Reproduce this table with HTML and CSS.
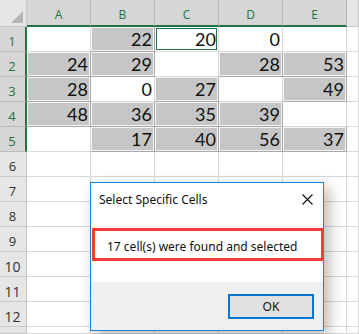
FILE: index.html
```html
<!DOCTYPE html>
<html lang="en">
<head>
    <meta charset="UTF-8">
    <title>Select Specific Cells</title>
    <link rel="stylesheet" href="styles.css">
</head>
<body>

    <div class="sheet">
        <!-- column headers -->
        <div class="corner"><span class="tri"></span></div>
        <div class="colhead sel">A</div>
        <div class="colhead sel">B</div>
        <div class="colhead sel">C</div>
        <div class="colhead sel">D</div>
        <div class="colhead sel">E</div>
        <div class="colhead"></div>

        <div class="rowhead sel">1</div>
        <div class="cell"></div>
        <div class="cell hit">22</div>
        <div class="cell active">20</div>
        <div class="cell">0</div>
        <div class="cell"></div>
        <div class="cell"></div>

        <div class="rowhead sel">2</div>
        <div class="cell hit">24</div>
        <div class="cell hit">29</div>
        <div class="cell"></div>
        <div class="cell hit">28</div>
        <div class="cell hit">53</div>
        <div class="cell"></div>

        <div class="rowhead sel">3</div>
        <div class="cell hit">28</div>
        <div class="cell">0</div>
        <div class="cell hit">27</div>
        <div class="cell"></div>
        <div class="cell hit">49</div>
        <div class="cell"></div>

        <div class="rowhead sel">4</div>
        <div class="cell hit">48</div>
        <div class="cell hit">36</div>
        <div class="cell hit">35</div>
        <div class="cell hit">39</div>
        <div class="cell"></div>
        <div class="cell"></div>

        <div class="rowhead sel">5</div>
        <div class="cell"></div>
        <div class="cell hit">17</div>
        <div class="cell hit">40</div>
        <div class="cell hit">56</div>
        <div class="cell hit">37</div>
        <div class="cell"></div>

        <div class="rowhead">6</div>
        <div class="cell"></div><div class="cell"></div><div class="cell"></div><div class="cell"></div><div class="cell"></div><div class="cell"></div>
        <div class="rowhead">7</div>
        <div class="cell"></div><div class="cell"></div><div class="cell"></div><div class="cell"></div><div class="cell"></div><div class="cell"></div>
        <div class="rowhead">8</div>
        <div class="cell"></div><div class="cell"></div><div class="cell"></div><div class="cell"></div><div class="cell"></div><div class="cell"></div>
        <div class="rowhead">9</div>
        <div class="cell"></div><div class="cell"></div><div class="cell"></div><div class="cell"></div><div class="cell"></div><div class="cell"></div>
        <div class="rowhead wide">10</div>
        <div class="cell"></div><div class="cell"></div><div class="cell"></div><div class="cell"></div><div class="cell"></div><div class="cell"></div>
        <div class="rowhead wide">11</div>
        <div class="cell"></div><div class="cell"></div><div class="cell"></div><div class="cell"></div><div class="cell"></div><div class="cell"></div>
        <div class="rowhead wide">12</div>
        <div class="cell"></div><div class="cell"></div><div class="cell"></div><div class="cell"></div><div class="cell"></div><div class="cell"></div>
        <!-- partly visible row 13 -->
        <div class="rowhead"></div>
        <div class="cell"></div><div class="cell"></div><div class="cell"></div><div class="cell"></div><div class="cell"></div><div class="cell"></div>
    </div>

    <!-- dialog sits over the sheet -->
    <div class="dialog">
        <div class="titlebar">
            <span class="title">Select Specific Cells</span>
            <svg class="close" width="11" height="11" viewBox="0 0 11 11">
                <path d="M0.5 0.5 L10.5 10.5 M10.5 0.5 L0.5 10.5" stroke="#111" stroke-width="1.1" fill="none"/>
            </svg>
        </div>
        <div class="dialog-body">
            <div class="msg">17 cell(s) were found and selected</div>
        </div>
        <div class="dialog-foot">
            <button class="ok">OK</button>
        </div>
    </div>

</body>
</html>
```

FILE: styles.css
```css
body {
    margin: 0;
    background-color: #fff;
    overflow: hidden;
    font-family: "Open Sans", "Noto Sans", sans-serif;
}

.sheet {
    display: grid;
    height: 100vh;
    grid-template-columns: 27px repeat(5, 64px) 1fr;
    grid-template-rows: 27px repeat(12, 25px) 1fr;
}

.sheet > div {
    box-sizing: border-box;
}

.corner {
    background-color: #e6e6e6;
    border-right: 1px solid #c9c9c9;
    border-bottom: 1px solid #c9c9c9;
    position: relative;
}

.tri {
    position: absolute;
    right: 3px;
    bottom: 3px;
    width: 0;
    height: 0;
    border-left: 12px solid transparent;
    border-bottom: 12px solid #b7b7b7;
}

.colhead {
    background-color: #e6e6e6;
    border-right: 1px solid #c9c9c9;
    border-bottom: 1px solid #c9c9c9;
    display: flex;
    justify-content: center;
    align-items: flex-end;
    padding-bottom: 3px;
    font-size: 12px;
    line-height: 14px;
    color: #444;
}

.colhead.sel {
    background-color: #d6d6d6;
    color: #217346;
    border-bottom: 2px solid #217346;
    border-right-color: #b9b9b9;
}

.rowhead {
    background-color: #e6e6e6;
    border-right: 1px solid #c9c9c9;
    border-bottom: 1px solid #c9c9c9;
    display: flex;
    justify-content: center;
    align-items: center;
    padding-top: 4px;
    padding-right: 1px;
    font-size: 13px;
    color: #333;
}

.rowhead.wide {
    font-size: 14px;
}

.rowhead.sel {
    background-color: #d6d6d6;
    color: #217346;
    border-right: 2px solid #217346;
    border-bottom-color: #b9b9b9;
}

.cell {
    border-right: 1px solid #d9d9d9;
    border-bottom: 1px solid #d9d9d9;
    text-align: right;
    padding-right: 2px;
    font-family: Lato, "Liberation Sans", sans-serif;
    font-size: 18px;
    line-height: 24px;
    color: #111;
}

.cell.hit {
    background-color: #c6c6c6;
    box-shadow: inset 0 0 0 1px #f4f4f4;
    border-color: #a9a9a9;
}

.cell.active {
    box-shadow: inset 0 0 0 1px #fff, inset 0 0 0 2px #217346;
}

/* dialog */
.dialog {
    position: absolute;
    left: 90px;
    top: 182px;
    width: 234px;
    height: 149px;
    box-sizing: border-box;
    border: 1px solid #1c84d6;
    background-color: #fff;
    display: flex;
    flex-direction: column;
    box-shadow: 5px 5px 14px rgba(0, 0, 0, 0.28);
    font-family: "Noto Sans", sans-serif;
    font-size: 12px;
    color: #111;
}

.titlebar {
    height: 32px;
    display: flex;
    align-items: center;
    justify-content: space-between;
    padding: 0 10px 0 8px;
}

.dialog-body {
    flex: 1;
    padding-top: 13px;
}

.msg {
    margin-right: -1px;
    margin-left: 1px;
    height: 33px;
    box-sizing: border-box;
    border: 3px solid #f33c3c;
    padding-left: 12px;
    display: flex;
    align-items: center;
    padding-top: 3px;
}

.dialog-foot {
    height: 48px;
    background-color: #f0f0f0;
    display: flex;
    justify-content: flex-end;
    align-items: flex-start;
    padding: 12px 9px 0 0;
    box-sizing: border-box;
}

.ok {
    width: 86px;
    height: 25px;
    background-color: #e1e1e1;
    border: 2px solid #0078d7;
    font-family: "Noto Sans", sans-serif;
    font-size: 12px;
    color: #111;
    padding: 0;
}
```
